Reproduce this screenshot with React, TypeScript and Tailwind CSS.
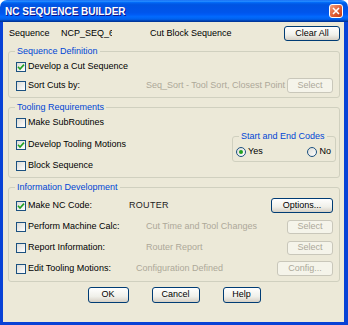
import React from 'react';

const font = "font-['Liberation_Sans',Arial,sans-serif]";

function Check({ checked }: { checked?: boolean }) {
  return (
    <span className="w-[10px] h-[10px] shrink-0 border border-[#1C5180] bg-[linear-gradient(135deg,#DCDCD7,#FFFFFF)] flex items-center justify-center">
      {checked && (
        <svg width="8" height="8" viewBox="0 0 8 8">
          <path d="M1 3.8 L3 6 L7 1.6" fill="none" stroke="#21A121" strokeWidth="1.6" />
        </svg>
      )}
    </span>
  );
}

function Radio({ checked }: { checked?: boolean }) {
  return (
    <span className="w-[10px] h-[10px] shrink-0 rounded-full border border-[#1C5180] bg-[linear-gradient(135deg,#DCDCD7,#FFFFFF)] flex items-center justify-center">
      {checked && <span className="w-[4px] h-[4px] rounded-full bg-[#21A121]" />}
    </span>
  );
}

function Btn({ children, className, disabled }: { children: React.ReactNode; className: string; disabled?: boolean }) {
  const look = disabled
    ? 'border-[#C9C7BA] bg-[#F5F4EA] text-[#ACA899]'
    : 'border-[#003C74] bg-[linear-gradient(180deg,#FFFFFF,#F0F0EA_60%,#D6D0C5)] text-black';
  return (
    <div className={`shrink-0 flex items-center justify-center rounded-[3px] border ${look} ${className}`}>
      {children}
    </div>
  );
}

function Group({ title, className, children }: { title: string; className: string; children: React.ReactNode }) {
  return (
    <div className={`relative shrink-0 border border-[#D0D0BF] rounded-[3px] ${className}`}>
      <span className="absolute -top-[7px] left-[6px] px-[2px] bg-[#ECE9D8] text-[#0046D5] leading-[13px] whitespace-nowrap">
        {title}
      </span>
      {children}
    </div>
  );
}

interface RowProps {
  checked?: boolean;
  label: string;
  labelW: string;
  mid?: string;
  midDark?: boolean;
  btn?: string;
  btnW?: string;
  btnH?: string;
  btnOn?: boolean;
  h: string;
}

function Row({ checked, label, labelW, mid, midDark, btn, btnW, btnH, btnOn, h }: RowProps) {
  return (
    <div className={`flex items-center pl-[7px] pr-[6px] ${h}`}>
      <Check checked={checked} />
      <span className={`ml-[2px] whitespace-nowrap ${labelW}`}>{label}</span>
      {mid && (
        <span className={`whitespace-nowrap ${midDark ? 'text-[#222] tracking-[0.3px]' : 'text-[#ACA899]'}`}>{mid}</span>
      )}
      <div className="flex-1" />
      {btn && (
        <Btn className={`${btnW} ${btnH}`} disabled={!btnOn}>
          {btn}
        </Btn>
      )}
    </div>
  );
}

export default function App() {
  return (
    <div className={`w-[348px] h-[325px] flex flex-col ${font} text-[9px] text-black`}>
      <div className="h-[22px] shrink-0 rounded-t-[7px] flex items-center pl-[5px] pr-[5px] bg-[linear-gradient(180deg,#0058EE_0%,#3593FF_4%,#288EFF_6%,#127DFF_8%,#036FFC_10%,#0262EE_14%,#0057E5_20%,#0054E3_24%,#0055EB_56%,#005BF5_66%,#026AFE_76%,#0062EF_86%,#0052D6_92%,#0040AB_94%,#003092_100%)]">
        <span className="flex-1 text-white font-bold text-[10px] [text-shadow:1px_1px_#0F1089]">NC SEQUENCE BUILDER</span>
        <div className="w-[14px] h-[14px] rounded-[3px] border border-white bg-[linear-gradient(135deg,#F0A080,#E2623A_50%,#C23A12)] flex items-center justify-center">
          <svg width="8" height="8" viewBox="0 0 8 8">
            <path d="M1 1 L7 7 M7 1 L1 7" stroke="white" strokeWidth="1.6" />
          </svg>
        </div>
      </div>

      <div className="flex-1 flex flex-col bg-[#ECE9D8] border-l-[3px] border-r-[4px] border-b-[3px] border-[#0842D6] pl-[5px] pr-[4px]">
        <div className="mt-[4px] h-[15px] shrink-0 flex items-center pl-px">
          <span className="w-[52px]">Sequence</span>
          {/* text field is narrower than its value, so the last digit shows cut */}
          <span className="w-[51px] overflow-hidden whitespace-nowrap">NCP_SEQ_6</span>
          <span className="ml-[38px] whitespace-nowrap">Cut Block Sequence</span>
          <div className="flex-1" />
          <Btn className="w-[56px] h-[15px]" disabled={false}>Clear All</Btn>
        </div>

        <Group title="Sequence Definition" className="mt-[10px] h-[47px] pt-[5px]">
          <Row checked label="Develop a Cut Sequence" labelW="w-[118px]" h="h-[19px]" />
          <Row
            label="Sort Cuts by:"
            labelW="w-[118px]"
            mid="Seq_Sort - Tool Sort, Closest Point"
            btn="Select"
            btnW="w-[46px]"
            btnH="h-[15px]"
            h="h-[19px]"
          />
        </Group>

        <Group title="Tooling Requirements" className="mt-[9px] h-[71px] flex">
          <div className="flex-1 flex flex-col pt-[4px]">
            <Row label="Make SubRoutines" labelW="w-[118px]" h="h-[22px]" />
            <Row checked label="Develop Tooling Motions" labelW="w-[118px]" h="h-[22px]" />
            <Row label="Block Sequence" labelW="w-[118px]" h="h-[22px]" />
          </div>
          <Group title="Start and End Codes" className="mt-[28px] mr-[3px] w-[104px] h-[26px] pt-[8px]">
            <div className="h-[14px] flex items-center pl-[3px] pr-[4px]">
              <Radio checked />
              <span className="ml-[2px]">Yes</span>
              <div className="flex-1" />
              <Radio />
              <span className="ml-[2px]">No</span>
            </div>
          </Group>
        </Group>

        <Group title="Information Development" className="mt-[9px] h-[95px] pt-[7px]">
          <Row
            checked
            label="Make NC Code:"
            labelW="w-[101px]"
            mid="ROUTER"
            midDark
            btn="Options..."
            btnW="w-[62px]"
            btnH="h-[15px]"
            btnOn
            h="h-[21px]"
          />
          <Row
            label="Perform Machine Calc:"
            labelW="w-[118px]"
            mid="Cut Time and Tool Changes"
            btn="Select"
            btnW="w-[46px]"
            btnH="h-[14px]"
            h="h-[21px]"
          />
          <Row
            label="Report Information:"
            labelW="w-[118px]"
            mid="Router Report"
            btn="Select"
            btnW="w-[46px]"
            btnH="h-[14px]"
            h="h-[21px]"
          />
          <Row
            label="Edit Tooling Motions:"
            labelW="w-[108px]"
            mid="Configuration Defined"
            btn="Config..."
            btnW="w-[56px]"
            btnH="h-[15px]"
            h="h-[21px]"
          />
        </Group>

        <div className="mt-[5px] flex justify-center gap-[23px]">
          <Btn className="w-[41px] h-[16px]">OK</Btn>
          <Btn className="w-[48px] h-[16px]">Cancel</Btn>
          <Btn className="w-[38px] h-[16px]">Help</Btn>
        </div>
      </div>
    </div>
  );
}
